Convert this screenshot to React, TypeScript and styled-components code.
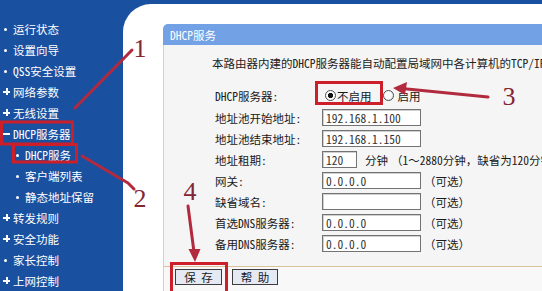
import React from "react";
import styled, { createGlobalStyle } from "styled-components";

const FONT = `"Noto Sans Mono CJK SC", "Noto Sans CJK SC", "Liberation Mono", monospace`;

const GlobalStyle = createGlobalStyle`
  html, body { margin: 0; padding: 0; background: #1a50a0; }
  body { font-family: ${FONT}; }
  * { box-sizing: border-box; }
`;

const Screen = styled.div`
  position: relative;
  width: 542px;
  height: 291px;
  overflow: hidden;
  display: flex;
  padding-top: 4px;
  background: #1a50a0;
  font-family: ${FONT};
  font-size: 11.5px;
  line-height: 14px;
`;

const Sidebar = styled.nav`
  width: 123px;
  flex: none;
  padding-top: 14px;
  display: flex;
  flex-direction: column;
`;

const MenuItem = styled.div<{ $level: number }>`
  height: 21px;
  display: flex;
  align-items: center;
  padding-left: ${(p) => (p.$level ? 15 : 3)}px;
  color: #ffffff;
  white-space: nowrap;
`;

type MarkerKind = "dot" | "plus" | "minus";

const Marker = styled.span<{ $kind: MarkerKind }>`
  position: relative;
  width: 10px;
  height: 10px;
  flex: none;
  &::before {
    content: "";
    position: absolute;
    background: #ffffff;
    ${(p) =>
      p.$kind === "dot"
        ? "left: 1px; top: 4px; width: 3px; height: 3px; border-radius: 50%;"
        : "left: 0; top: 4px; width: 7px; height: 2px;"}
  }
  &::after {
    content: "";
    position: absolute;
    background: #ffffff;
    ${(p) => (p.$kind === "plus" ? "left: 2.5px; top: 1.5px; width: 2px; height: 7px;" : "display: none;")}
  }
`;

const Main = styled.main`
  flex: 1;
  min-width: 0;
  background: #ffffff;
  border-top-left-radius: 28px;
  padding: 20px 0 0 40px;
  display: flex;
  flex-direction: column;
`;

const Panel = styled.section`
  flex: 1;
  display: flex;
  flex-direction: column;
`;

const PanelHeader = styled.header`
  height: 21px;
  flex: none;
  display: flex;
  align-items: center;
  padding-left: 7px;
  background: #72a1e5;
  border-top-left-radius: 5px;
  color: #ffffff;
`;

const PanelBody = styled.div`
  background: #f5f5f5;
  border-left: 1px solid #d6cfc3;
  padding: 11px 0 12px 48px;
  white-space: nowrap;
`;

const Intro = styled.p`
  margin: 0;
  color: #222222;
`;

const Form = styled.div`
  margin: 14px 0 0 3px;
  display: flex;
  flex-direction: column;
`;

const Row = styled.div<{ $tall?: boolean }>`
  height: ${(p) => (p.$tall ? 23 : 21)}px;
  display: grid;
  grid-template-columns: 107px auto;
  align-items: center;
`;

const Label = styled.span`
  color: #1a1a1a;
`;

const Value = styled.div`
  display: flex;
  align-items: center;
  color: #1a1a1a;
`;

const Field = styled.input<{ $w: number }>`
  width: ${(p) => p.$w}px;
  height: 17px;
  margin: 0;
  padding: 0 0 0 3px;
  border: 1px solid #737373;
  box-shadow: inset 1px 1px 0 #d0d0d0;
  background: #ffffff;
  color: #333333;
  font-family: ${FONT};
  font-size: 11.5px;
  line-height: 15px;
  outline: none;
`;

const Radio = styled.input<{ $gap: number }>`
  appearance: none;
  width: 11px;
  height: 11px;
  margin: 0 1px 0 ${(p) => p.$gap}px;
  border: 1px solid #4d4d4d;
  border-radius: 50%;
  background: radial-gradient(circle at 40% 40%, #ffffff 0 40%, #d8d8d8 100%);
  &:checked {
    background: radial-gradient(circle, #111111 0 2.4px, #ffffff 2.9px 100%);
  }
`;

const Note = styled.span<{ $gap: number }>`
  margin-left: ${(p) => p.$gap}px;
  color: #1a1a1a;
`;

const Footer = styled.div`
  flex: 1;
  background: #f8f8f8;
  border-left: 1px solid #d6cfc3;
  border-top: 1px solid #d8c39b;
  padding: 2px 0 0 11px;
  display: flex;
  align-items: flex-start;
  gap: 10px;
`;

const Button = styled.button<{ $w: number }>`
  width: ${(p) => p.$w}px;
  height: 16px;
  padding: 0;
  border: 1px solid #3d3d3d;
  background: #e5e9f3;
  color: #1b1b1b;
  font-family: ${FONT};
  font-size: 11.5px;
  line-height: 14px;
`;

const Overlay = styled.svg`
  position: absolute;
  left: 0;
  top: 0;
  width: 542px;
  height: 291px;
  pointer-events: none;
`;

const menu: { text: string; kind: MarkerKind; level: number }[] = [
  { text: "运行状态", kind: "dot", level: 0 },
  { text: "设置向导", kind: "dot", level: 0 },
  { text: "QSS安全设置", kind: "dot", level: 0 },
  { text: "网络参数", kind: "plus", level: 0 },
  { text: "无线设置", kind: "plus", level: 0 },
  { text: "DHCP服务器", kind: "minus", level: 0 },
  { text: "DHCP服务", kind: "dot", level: 1 },
  { text: "客户端列表", kind: "dot", level: 1 },
  { text: "静态地址保留", kind: "dot", level: 1 },
  { text: "转发规则", kind: "plus", level: 0 },
  { text: "安全功能", kind: "plus", level: 0 },
  { text: "家长控制", kind: "dot", level: 0 },
  { text: "上网控制", kind: "plus", level: 0 },
];

const fields: { label: string; value: string }[] = [
  { label: "网关:", value: "0.0.0.0" },
  { label: "缺省域名:", value: "" },
  { label: "首选DNS服务器:", value: "0.0.0.0" },
  { label: "备用DNS服务器:", value: "0.0.0.0" },
];

const BOX = "#cc1f2a";
const LINE = "#b22a3e";
const NUM = "#832634";

export default function App() {
  return (
    <>
      <GlobalStyle />
      <Screen>
        <Sidebar>
          {menu.map((m) => (
            <MenuItem key={m.text} $level={m.level}>
              <Marker $kind={m.kind} />
              {m.text}
            </MenuItem>
          ))}
        </Sidebar>
        <Main>
          <Panel>
            <PanelHeader>DHCP服务</PanelHeader>
            <PanelBody>
              <Intro>本路由器内建的DHCP服务器能自动配置局域网中各计算机的TCP/IP协议。</Intro>
              <Form>
                <Row $tall>
                  <Label>DHCP服务器:</Label>
                  <Value>
                    <Radio type="radio" name="dhcp" defaultChecked $gap={3} />
                    不启用
                    <Radio type="radio" name="dhcp" $gap={11} />
                    <Note $gap={3}>启用</Note>
                  </Value>
                </Row>
                <Row>
                  <Label>地址池开始地址:</Label>
                  <Value>
                    <Field $w={99} readOnly defaultValue="192.168.1.100" />
                  </Value>
                </Row>
                <Row>
                  <Label>地址池结束地址:</Label>
                  <Value>
                    <Field $w={99} readOnly defaultValue="192.168.1.150" />
                  </Value>
                </Row>
                <Row>
                  <Label>地址租期:</Label>
                  <Value>
                    <Field $w={35} readOnly defaultValue="120" />
                    <Note $gap={8}>分钟</Note>
                    <Note $gap={3}>（1～2880分钟，缺省为120分钟）</Note>
                  </Value>
                </Row>
                {fields.map((f) => (
                  <Row key={f.label}>
                    <Label>{f.label}</Label>
                    <Value>
                      <Field $w={99} readOnly defaultValue={f.value} />
                      <Note $gap={3}>（可选）</Note>
                    </Value>
                  </Row>
                ))}
              </Form>
            </PanelBody>
            <Footer>
              <Button $w={47}>保 存</Button>
              <Button $w={46}>帮 助</Button>
            </Footer>
          </Panel>
        </Main>
        <Overlay viewBox="0 0 542 291">
          <g fill="none" stroke={BOX} strokeWidth={3}>
            <rect x={1.5} y={122} width={71} height={22} />
            <rect x={13.5} y={144.5} width={63} height={17.5} />
            <rect x={316.5} y={82.5} width={65} height={21} />
            <rect x={171.5} y={263.5} width={55} height={40} />
          </g>
          <g fill="none" stroke={LINE} strokeWidth={3} strokeLinecap="round" strokeLinejoin="round">
            <line x1={132} y1={50} x2={75} y2={108} />
            <polyline points="82,156 128,183 134,189" />
            <line x1={488} y1={97} x2={402} y2={88.5} />
            <line x1={188} y1={206} x2={194} y2={252} />
          </g>
          <g fill={LINE}>
            <polygon points="393,88 407,82 405,95" />
            <polygon points="195,262 188.5,249 200.5,249" />
          </g>
          <g fill={NUM} fontFamily='"Liberation Serif", serif' fontSize={26} textAnchor="middle">
            <text x={140} y={57}>1</text>
            <text x={140} y={207}>2</text>
            <text x={509} y={105}>3</text>
            <text x={190} y={200}>4</text>
          </g>
        </Overlay>
      </Screen>
    </>
  );
}
